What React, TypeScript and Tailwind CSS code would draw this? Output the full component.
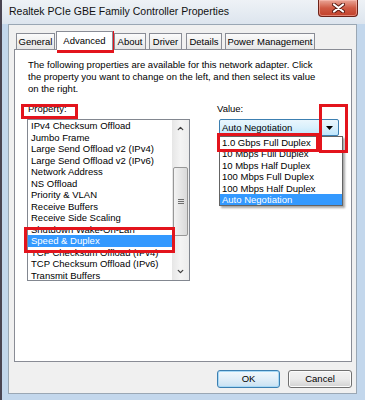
import { ChevronDown, ChevronUp } from 'lucide-react'

const properties = [
  'IPv4 Checksum Offload',
  'Jumbo Frame',
  'Large Send Offload v2 (IPv4)',
  'Large Send Offload v2 (IPv6)',
  'Network Address',
  'NS Offload',
  'Priority & VLAN',
  'Receive Buffers',
  'Receive Side Scaling',
  'Shutdown Wake-On-Lan',
  'Speed & Duplex',
  'TCP Checksum Offload (IPv4)',
  'TCP Checksum Offload (IPv6)',
  'Transmit Buffers',
]

const speeds = [
  '1.0 Gbps Full Duplex',
  '10 Mbps Full Duplex',
  '10 Mbps Half Duplex',
  '100 Mbps Full Duplex',
  '100 Mbps Half Duplex',
  'Auto Negotiation',
]

const tabs = [
  { label: 'General', cls: 'ml-[7px] w-[39px]' },
  { label: 'Advanced', cls: 'ml-[1px] w-[57px]', active: true },
  { label: 'About', cls: 'ml-[1px] w-[32px]' },
  { label: 'Driver', cls: 'ml-[3px] w-[33px]' },
  { label: 'Details', cls: 'ml-[4px] w-[36px]' },
  { label: 'Power Management', cls: 'ml-[3px] w-[90px]' },
]

export default function App() {
  return (
    <div className="relative h-[400px] w-[365px] overflow-hidden border-l-2 border-[#4a4552] bg-[#c3d7ec] font-['Liberation_Sans',Arial,sans-serif] text-[9.5px] text-black">
      <div className="flex h-[24px] items-start justify-between bg-gradient-to-b from-[#eef2f6] to-[#dde5ee]">
        <span className="pl-[7px] pt-[5px] text-[10.5px] leading-[13px] text-[#111]">
          Realtek PCIe GBE Family Controller Properties
        </span>
        <CloseButton />
      </div>

      <div className="ml-[6px] flex h-[370px] w-[349px] flex-col border border-[#9aa7b4] bg-[#f0f0f0]">
        <div className="flex h-[24px] items-end pt-[8px]">
          {tabs.map((tab) =>
            tab.active ? (
              <div
                key={tab.label}
                className={`${tab.cls} relative z-10 -mb-px flex h-[19px] items-start justify-center border border-b-0 border-[#898c95] bg-white pt-[3px] leading-[11px]`}
              >
                {tab.label}
              </div>
            ) : (
              <div
                key={tab.label}
                className={`${tab.cls} flex h-[16px] items-center justify-center border border-b-0 border-[#898c95] bg-gradient-to-b from-[#fbfbfb] to-[#e6e6e6] leading-[11px]`}
              >
                {tab.label}
              </div>
            ),
          )}
        </div>

        <div className="ml-[5px] flex h-[313px] w-[338px] flex-col border border-[#898c95] bg-white">
          <p className="whitespace-nowrap pl-[13px] pt-[9px] leading-[12px]">
            The following properties are available for this network adapter. Click
            <br />
            the property you want to change on the left, and then select its value
            <br />
            on the right.
          </p>

          <div className="mt-[8px] flex pl-[12px]">
            <div className="flex w-[163px] flex-col">
              <span className="pl-[1px] leading-[12px]">Property:</span>
              <PropertyList />
            </div>
            <div className="ml-[27px] flex flex-col">
              <span className="leading-[12px]">Value:</span>
              <SpeedCombo />
            </div>
          </div>
        </div>

        <div className="mt-[8px] flex justify-end gap-[8px] pr-[4px]">
          <button
            type="button"
            className="h-[18px] w-[63px] rounded-[3px] border border-[#3c7fb1] bg-gradient-to-b from-[#f2f8fc] via-[#e1eef8] to-[#c8e1f3] leading-[16px] shadow-[inset_0_0_0_1px_#a8d9f6]"
          >
            OK
          </button>
          <button
            type="button"
            className="h-[18px] w-[64px] rounded-[3px] border border-[#707070] bg-gradient-to-b from-[#f2f2f2] via-[#ebebeb] to-[#d2d2d2] leading-[16px] shadow-[inset_0_0_0_1px_#fcfcfc]"
          >
            Cancel
          </button>
        </div>
      </div>

      {/* red annotation boxes */}
      <div className="absolute left-[55px] top-[31px] h-[22px] w-[57px] border-[3px] border-[#e3141c]" />
      <div className="absolute left-[19px] top-[104px] h-[15px] w-[57px] border-[3px] border-[#e3141c]" />
      <div className="absolute left-[22px] top-[227px] h-[26px] w-[151px] border-[3px] border-[#e3141c]" />
      <div className="absolute left-[317px] top-[104px] h-[49px] w-[29px] border-[3px] border-[#e3141c]" />
      <div className="absolute left-[215px] top-[133px] h-[19px] w-[102px] border-[3px] border-[#e3141c]" />
    </div>
  )
}

function CloseButton() {
  return (
    <div className="mr-[7px] flex h-[17px] w-[40px] items-center justify-center rounded-b-[4px] border border-t-0 border-[#6d2218] bg-gradient-to-b from-[#e9a597] via-[#cf5a44] to-[#c2402a] shadow-[inset_0_0_0_1px_rgba(255,200,190,0.5)]">
      <svg width="13" height="10" viewBox="0 0 13 10">
        <path d="M2 1.5 L11 8.5 M11 1.5 L2 8.5" stroke="#5a1a12" strokeWidth="4" strokeLinecap="round" />
        <path d="M2 1.5 L11 8.5 M11 1.5 L2 8.5" stroke="#ffffff" strokeWidth="2.2" strokeLinecap="round" />
      </svg>
    </div>
  )
}

function PropertyList() {
  return (
    <div className="mt-[4px] flex h-[162px] w-[163px] border border-[#828790] bg-white">
      <ul className="flex-1">
        {properties.map((name) => (
          <li
            key={name}
            className={`h-[11.5px] whitespace-nowrap pl-[3px] leading-[11.5px] ${
              name === 'Speed & Duplex' ? 'bg-[#3399ff] text-white' : ''
            }`}
          >
            {name}
          </li>
        ))}
      </ul>
      <div className="flex w-[17px] flex-col bg-gradient-to-r from-[#e6e6e6] via-[#f4f4f4] to-[#ececec]">
        <div className="flex h-[17px] items-center justify-center">
          <ChevronUp size={9} strokeWidth={3.5} className="text-[#404040]" />
        </div>
        <div className="h-[30px]" />
        <div className="mx-[1px] flex h-[69px] items-center justify-center rounded-[2px] border border-[#979797] bg-gradient-to-r from-[#f3f3f3] to-[#d9d9d9]">
          <div className="flex flex-col gap-[1px]">
            <div className="h-px w-[6px] bg-[#6e6e6e]" />
            <div className="h-px w-[6px] bg-[#6e6e6e]" />
            <div className="h-px w-[6px] bg-[#6e6e6e]" />
          </div>
        </div>
        <div className="flex-1" />
        <div className="flex h-[17px] items-center justify-center">
          <ChevronDown size={9} strokeWidth={3.5} className="text-[#404040]" />
        </div>
      </div>
    </div>
  )
}

function SpeedCombo() {
  return (
    <div className="relative ml-[2px] mt-[4px]">
      <div className="flex h-[17px] w-[120px] items-center justify-between rounded-[2px] border border-[#3c7fb1] bg-gradient-to-b from-[#eaf6fd] via-[#d9f0fc] to-[#bee6fd] pl-[2px] pr-[5px]">
        <span className="leading-[12px]">Auto Negotiation</span>
        <svg width="7" height="4" viewBox="0 0 7 4">
          <path d="M0 0 H7 L3.5 4 Z" fill="#000" />
        </svg>
      </div>
      <ul className="absolute left-0 top-full h-[70px] w-[124px] border border-[#646464] bg-white shadow-[2px_2px_2px_rgba(0,0,0,0.35)]">
        {speeds.map((s) => (
          <li
            key={s}
            className={`h-[11.4px] whitespace-nowrap pl-[2px] leading-[11.4px] ${
              s === 'Auto Negotiation' ? 'bg-[#3399ff] text-white' : ''
            }`}
          >
            {s}
          </li>
        ))}
      </ul>
    </div>
  )
}
